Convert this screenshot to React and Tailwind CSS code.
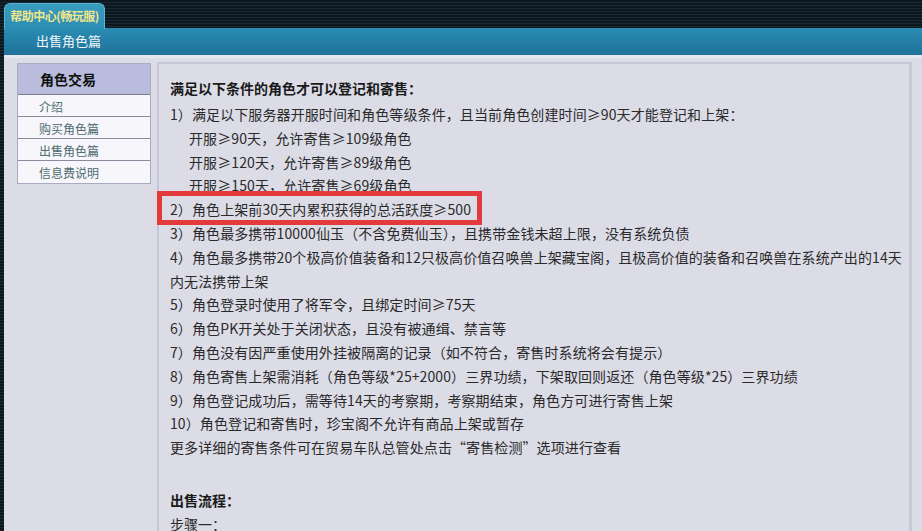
export default function App() {
  const font = { fontFamily: '"Noto Sans CJK SC", "Noto Sans", sans-serif' };
  const lines = [
    "1）满足以下服务器开服时间和角色等级条件，且当前角色创建时间≥90天才能登记和上架：",
    "__开服≥90天，允许寄售≥109级角色",
    "__开服≥120天，允许寄售≥89级角色",
    "__开服≥150天，允许寄售≥69级角色",
    "2）角色上架前30天内累积获得的总活跃度≥500",
    "3）角色最多携带10000仙玉（不含免费仙玉），且携带金钱未超上限，没有系统负债",
    "4）角色最多携带20个极高价值装备和12只极高价值召唤兽上架藏宝阁，且极高价值的装备和召唤兽在系统产出的14天",
    "内无法携带上架",
    "5）角色登录时使用了将军令，且绑定时间≥75天",
    "6）角色PK开关处于关闭状态，且没有被通缉、禁言等",
    "7）角色没有因严重使用外挂被隔离的记录（如不符合，寄售时系统将会有提示）",
    "8）角色寄售上架需消耗（角色等级*25+2000）三界功绩，下架取回则返还（角色等级*25）三界功绩",
    "9）角色登记成功后，需等待14天的考察期，考察期结束，角色方可进行寄售上架",
    "10）角色登记和寄售时，珍宝阁不允许有商品上架或暂存",
    "更多详细的寄售条件可在贸易车队总管处点击“寄售检测”选项进行查看",
  ];
  return (
    <div className="w-[922px] h-[531px] overflow-hidden relative bg-[repeating-linear-gradient(180deg,#0c1820_0px,#0c1820_2px,#1b2b34_2px,#1b2b34_3px)]" style={font}>
      {/* Tab */}
      <div className="absolute left-[4px] top-[3px] w-[101px] h-[26px] rounded-t-[6px] bg-gradient-to-b from-[#3a9cbd] to-[#2a8db3] border border-[#5fb3cf] border-b-0 flex items-start justify-center pt-[4px] z-10">
        <span className="text-[12px] leading-[16px] font-bold text-[#f2e68a] tracking-[-0.5px]">帮助中心(畅玩服)</span>
      </div>
      <div className="flex flex-col h-full pt-[28px] pl-[4px]">
        {/* blue bar */}
        <div className="h-[27px] shrink-0 bg-gradient-to-b from-[#2a8db3] to-[#20729a] flex items-center pl-[32px]">
          <span className="text-[13px] text-[#f0f6f8] leading-none pb-[3px]">出售角色篇</span>
        </div>
        {/* content */}
        <div className="flex-1 min-h-0 overflow-hidden bg-[#dcdce7] border-t-[3px] border-[#e6e6ef] flex pt-[4px] pl-[13px] pr-[10px] gap-[6px]">
          {/* sidebar */}
          <div className="w-[134px] shrink-0 pt-[1px]">
            <div className="border border-[#a9abc2] bg-[#f6f6fb]">
              <div className="h-[31px] bg-[#b9bcdc] flex items-center pl-[22px] border-b border-[#7c7e90]">
                <span className="text-[14px] font-bold text-[#111]">角色交易</span>
              </div>
              {["介绍", "购买角色篇", "出售角色篇", "信息费说明"].map((t, i) => (
                <div key={t} className={`h-[22px] flex items-center pl-[21px] pt-[2px] text-[12px] text-[#4f6b70] ${i < 3 ? "border-b border-[#8a8c9c]" : ""}`}>
                  {t}
                </div>
              ))}
            </div>
          </div>
          {/* main */}
          <div className="flex-1 border-l-[2px] border-t-[2px] border-r-[3px] border-[#c7c7d8] pl-[11px] pt-[12px] text-[14px] text-[#2a2a2a] relative">
            <div className="font-bold leading-[24px] mb-[3px] text-[#1a1a1a]">满足以下条件的角色才可以登记和寄售：</div>
            {lines.map((l, i) => (
              <div key={i} className={`leading-[23.8px] whitespace-nowrap tracking-[0.1px] ${l.startsWith("__") ? "pl-[19px]" : ""}`}>
                {l.replace("__", "")}
              </div>
            ))}
            <div className="h-[28px]" />
            <div className="font-bold leading-[24px] text-[#1a1a1a]">出售流程：</div>
            <div className="leading-[24px]">步骤一：</div>
            <div className="absolute left-[-2px] top-[127px] w-[325px] h-[34px] border-[5px] border-[#e33a3c]" />
          </div>
        </div>
      </div>
    </div>
  );
}
